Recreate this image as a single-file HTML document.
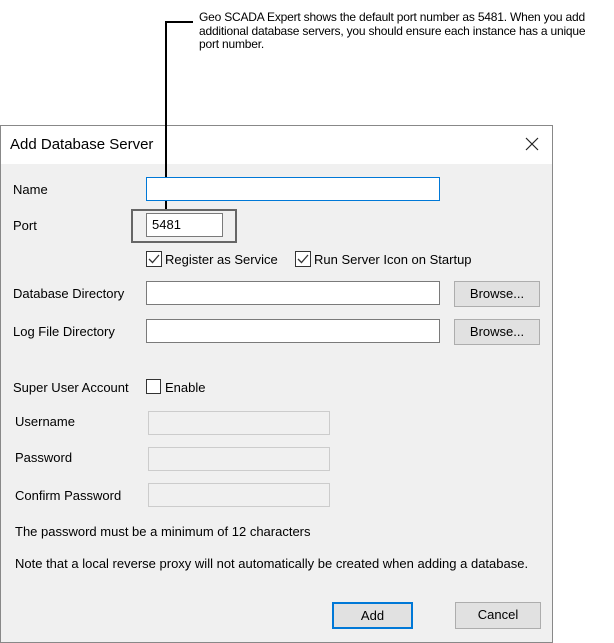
<!DOCTYPE html>
<html><head><style>
body{margin:0;width:614px;height:642px;background:#fff;position:relative;overflow:hidden;font-family:"Liberation Sans",Arial,sans-serif;}
.a{position:absolute;}
.t{font-size:13px;color:#000;letter-spacing:0px}
.dlg{left:0;top:125px;width:551px;height:516px;border:1px solid #888;background:#f0f0f0;}
.inp{background:#fff;border:1px solid #7a7a7a;box-sizing:border-box;}
.dis{background:#f0f0f0;border:1px solid #ccc;box-sizing:border-box;}
.btn{background:#e1e1e1;border:1px solid #adadad;box-sizing:border-box;font-size:13px;text-align:center;line-height:24px;}
.cb{width:15px;height:15px;border:1px solid #333;background:#fff;box-sizing:border-box;}
</style></head><body>
<div class="a dlg">
<div class="a" style="left:0;top:0;width:551px;height:38px;background:#fff"></div>
<div class="a" style="left:9px;top:10px;font-size:15px">Add Database Server</div>
<svg class="a" style="left:524px;top:11px" width="14" height="14"><path d="M1 1L13 13M13 1L1 13" stroke="#222" stroke-width="1.2"/></svg>
</div>
<div class="a" style="left:166px;top:21px;width:27px;height:2px;background:#000"></div>
<div class="a" style="left:165px;top:21px;width:2px;height:188px;background:#000"></div>
<div class="a" style="left:199px;top:11px;width:415px;font-size:12px;line-height:13.5px;letter-spacing:-0.2px;color:#000;white-space:nowrap">Geo SCADA Expert shows the default port number as 5481. When you add<br>additional database servers, you should ensure each instance has a unique<br>port number.</div>
<div class="a t" style="left:13px;top:182px">Name</div>
<div class="a" style="left:146px;top:177px;width:294px;height:24px;border:1px solid #0078d7;background:#fff;box-sizing:border-box"></div>
<div class="a t" style="left:13px;top:218px">Port</div>
<div class="a" style="left:131px;top:209px;width:106px;height:34px;border:2px solid #666;box-sizing:border-box"></div>
<div class="a inp" style="left:146px;top:213px;width:77px;height:24px;font-size:13px;padding:3px 5px">5481</div>
<svg class="a" style="left:146px;top:251px" width="17" height="17"><rect x=".5" y=".5" width="15" height="15" fill="#fff" stroke="#333"/><path d="M3 8l3.5 3.5L13 4" fill="none" stroke="#333" stroke-width="1.3"/></svg>
<div class="a t" style="left:165px;top:252px">Register as Service</div>
<svg class="a" style="left:295px;top:251px" width="17" height="17"><rect x=".5" y=".5" width="15" height="15" fill="#fff" stroke="#333"/><path d="M3 8l3.5 3.5L13 4" fill="none" stroke="#333" stroke-width="1.3"/></svg>
<div class="a t" style="left:314px;top:252px">Run Server Icon on Startup</div>
<div class="a t" style="left:13px;top:286px">Database Directory</div>
<div class="a inp" style="left:146px;top:281px;width:294px;height:24px"></div>
<div class="a btn" style="left:454px;top:281px;width:86px;height:26px">Browse...</div>
<div class="a t" style="left:13px;top:324px">Log File Directory</div>
<div class="a inp" style="left:146px;top:319px;width:294px;height:24px"></div>
<div class="a btn" style="left:454px;top:319px;width:86px;height:26px">Browse...</div>
<div class="a t" style="left:13px;top:380px">Super User Account</div>
<div class="a cb" style="left:146px;top:379px"></div>
<div class="a t" style="left:165px;top:380px">Enable</div>
<div class="a t" style="left:15px;top:414px">Username</div>
<div class="a dis" style="left:148px;top:411px;width:182px;height:24px"></div>
<div class="a t" style="left:15px;top:450px">Password</div>
<div class="a dis" style="left:148px;top:447px;width:182px;height:24px"></div>
<div class="a t" style="left:15px;top:488px">Confirm Password</div>
<div class="a dis" style="left:148px;top:483px;width:182px;height:24px"></div>
<div class="a t" style="left:15px;top:524px">The password must be a minimum of 12 characters</div>
<div class="a t" style="left:15px;top:556px">Note that a local reverse proxy will not automatically be created when adding a database.</div>
<div class="a btn" style="left:332px;top:602px;width:81px;height:27px;border:2px solid #0078d7;line-height:23px">Add</div>
<div class="a btn" style="left:455px;top:602px;width:86px;height:27px">Cancel</div>
</body></html>
